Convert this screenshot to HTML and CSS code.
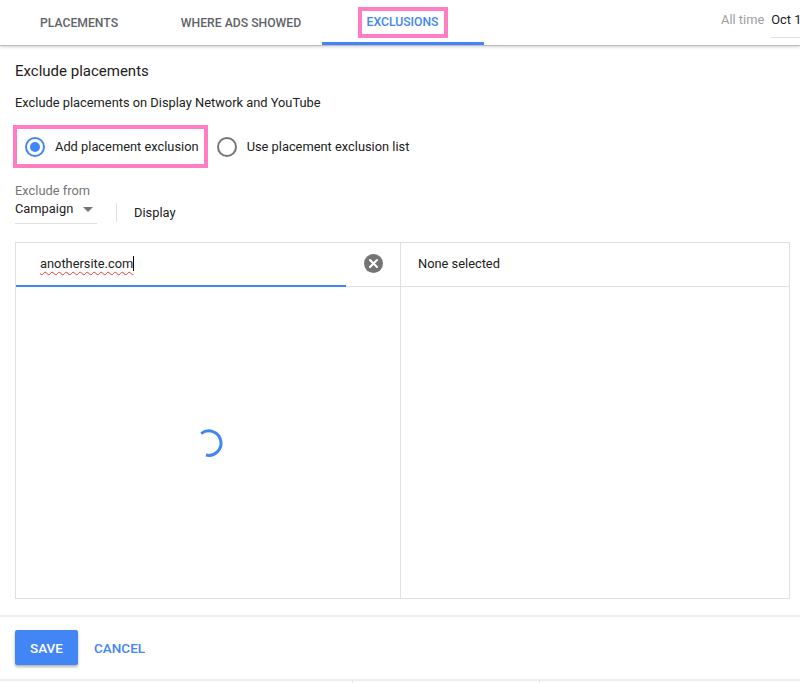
FILE: index.html
```html
<!DOCTYPE html>
<html lang="en">
<head>
  <meta charset="UTF-8" />
  <meta name="viewport" content="width=device-width, initial-scale=1.0" />
  <title>Placements – Exclusions</title>
  <link rel="stylesheet" href="styles.css">
</head>
<body>
  <header class="tabbar">
    <nav class="tabs">
      <a class="tab">PLACEMENTS</a>
      <a class="tab">WHERE ADS SHOWED</a>
      <a class="tab tab-active"><span class="mark mark-tab">EXCLUSIONS</span></a>
    </nav>
    <div class="range">
      <span class="range-label">All time</span>
      <span class="range-value">Oct 1, 2018 – Oct 31, 2018</span>
    </div>
  </header>

  <main class="content">
    <h2 class="title">Exclude placements</h2>
    <p class="subtitle">Exclude placements on Display Network and YouTube</p>

    <div class="radios">
      <label class="radio mark mark-radio">
        <span class="radio-dot radio-on"></span>
        Add placement exclusion
      </label>
      <label class="radio">
        <span class="radio-dot"></span>
        Use placement exclusion list
      </label>
    </div>

    <div class="scope">
      <div class="scope-label">Exclude from</div>
      <div class="scope-row">
        <div class="select">
          Campaign
          <span class="caret"></span>
        </div>
        <div class="scope-sep"></div>
        <div class="scope-value">Display</div>
      </div>
    </div>

    <div class="picker">
      <div class="picker-col picker-left">
        <div class="picker-head">
          <div class="search">
            <span class="search-text">anothersite.com</span><span class="cursor"></span>
          </div>
          <span class="clear">
            <svg width="19" height="19" viewBox="0 0 20 20">
              <circle cx="10" cy="10" r="10" fill="#757575"/>
              <path d="M6.3 6.3 L13.7 13.7 M13.7 6.3 L6.3 13.7" stroke="#fff" stroke-width="2.2" stroke-linecap="round"/>
            </svg>
          </span>
        </div>
        <div class="picker-body">
          <svg class="spinner" width="32" height="32" viewBox="0 0 32 32">
            <path d="M9.2 6.6 A12.2 12.2 0 1 1 13.9 28" fill="none" stroke="#4285f4" stroke-width="3"/>
          </svg>
        </div>
      </div>
      <div class="picker-col">
        <div class="picker-head picker-head-right">None selected</div>
        <div class="picker-body"></div>
      </div>
    </div>
  </main>

  <footer class="actions">
    <button class="btn-save">SAVE</button>
    <button class="btn-cancel">CANCEL</button>
  </footer>

  <div class="table-top">
    <div class="cell cell-first"></div>
    <div class="cell cell-second"></div>
    <div class="cell"></div>
  </div>
</body>
</html>
```

FILE: styles.css
```css
:root {
  --blue: #4285f4;
  --pink: #ff7ec2;
  --text: #212121;
  --muted: #757575;
  --line: #e0e0e0;
}
body {
  margin: 0;
  width: 800px;
  overflow: hidden;
  font-family: Roboto, "Liberation Sans", sans-serif;
  font-size: 12.85px;
  color: var(--text);
  background: #fff;
}

/* tab bar */
.tabbar {
  display: flex;
  height: 45px;
  border-bottom: 1px solid #bdbdbd;
  box-shadow: 0 1px 3px rgba(0, 0, 0, 0.18);
  white-space: nowrap;
}
.tabs {
  display: flex;
  margin-left: -2px;
}
.tab {
  width: 162px;
  box-sizing: border-box;
  display: flex;
  align-items: center;
  justify-content: center;
  font-size: 12.2px;
  font-weight: 500;
  color: #5f6368;
  border-bottom: 3px solid transparent;
  padding-top: 3px;
}
.tab-active {
  color: var(--blue);
  border-bottom-color: var(--blue);
}
.mark {
  border: 4px solid var(--pink);
}
.mark-tab {
  padding: 4px 6px 4px 5px;
  line-height: 15px;
}
.range {
  display: flex;
  align-items: flex-start;
  margin-left: 237px;
  padding-top: 12px;
  flex-shrink: 0;
}
.range-label {
  color: #9e9e9e;
  line-height: 16px;
}
.range-value {
  margin-left: 7px;
  line-height: 16px;
  padding-bottom: 9px;
  border-bottom: 1px solid var(--line);
}

/* form */
.content {
  padding: 15px 11px 0 15px;
}
.title {
  margin: 0;
  font-size: 15px;
  font-weight: 400;
  line-height: 20px;
}
.subtitle {
  margin: 13px 0 0;
  line-height: 18px;
}
.radios {
  display: flex;
  align-items: center;
  margin: 13px 0 0 -2px;
}
.radio {
  display: flex;
  align-items: center;
  gap: 10px;
  height: 35px;
}
.mark-radio {
  padding: 0 5px 0 8px;
  margin-right: 9px;
}
.radio-dot {
  width: 16px;
  height: 16px;
  border: 2px solid var(--muted);
  border-radius: 50%;
  position: relative;
}
.radio-on {
  border-color: var(--blue);
}
.radio-on::after {
  content: "";
  position: absolute;
  left: 3px;
  top: 3px;
  width: 10px;
  height: 10px;
  border-radius: 50%;
  background: var(--blue);
}
.scope {
  margin-top: 15px;
}
.scope-label {
  color: var(--muted);
  line-height: 16px;
}
.scope-row {
  display: flex;
  align-items: flex-end;
}
.select {
  width: 82px;
  box-sizing: border-box;
  height: 25px;
  padding-top: 2px;
  border-bottom: 1px solid var(--line);
  line-height: 16px;
  display: flex;
  align-items: flex-start;
}
.caret {
  margin: 6px 0 0 10px;
  border-left: 5px solid transparent;
  border-right: 5px solid transparent;
  border-top: 5px solid var(--muted);
}
.scope-sep {
  width: 1px;
  height: 19px;
  background: var(--line);
  margin: 0 17px 2px 19px;
}
.scope-value {
  line-height: 16px;
  padding-bottom: 3px;
}

/* picker */
.picker {
  margin-top: 18px;
  width: 775px;
  height: 357px;
  box-sizing: border-box;
  border: 1px solid var(--line);
  display: grid;
  grid-template-columns: 385px 1fr;
}
.picker-col {
  display: flex;
  flex-direction: column;
}
.picker-left {
  border-right: 1px solid var(--line);
}
.picker-head {
  height: 44px;
  box-sizing: border-box;
  border-bottom: 1px solid var(--line);
  display: flex;
  align-items: center;
}
.picker-head-right {
  padding-left: 17px;
  padding-bottom: 2px;
}
.search {
  width: 330px;
  height: 43px;
  box-sizing: border-box;
  border-bottom: 2px solid var(--blue);
  margin-bottom: -1px;
  padding: 0 0 2px 24px;
  display: flex;
  align-items: center;
}
.search-text {
  text-decoration: underline wavy #e53935;
  text-decoration-thickness: 1px;
  text-underline-offset: 3px;
}
.cursor {
  width: 1px;
  height: 15px;
  background: #000;
}
.clear {
  display: flex;
  margin-left: 18px;
  margin-bottom: 2px;
}
.picker-body {
  flex: 1;
  display: flex;
  align-items: center;
  justify-content: center;
}

/* footer */
.actions {
  margin-top: 16px;
  border-top: 2px solid #eeeeee;
  padding: 13px 15px 14px;
  display: flex;
  align-items: center;
  gap: 16px;
}
.actions button {
  font-family: Roboto, "Liberation Sans", sans-serif;
  font-size: 13.5px;
  font-weight: 500;
  border: none;
  background: none;
  cursor: pointer;
}
.btn-save {
  width: 63px;
  height: 35px;
  color: #fff;
  background: var(--blue) !important;
  border-radius: 2px;
  box-shadow: 0 2px 3px rgba(0, 0, 0, 0.3);
}
.btn-cancel {
  color: var(--blue);
  padding: 0;
}
.table-top {
  display: flex;
  height: 4px;
  border-top: 2px solid #eeeeee;
}
.cell-first {
  width: 352px;
  border-right: 1px solid var(--line);
}
.cell-second {
  width: 186px;
  border-right: 1px solid var(--line);
}
```
